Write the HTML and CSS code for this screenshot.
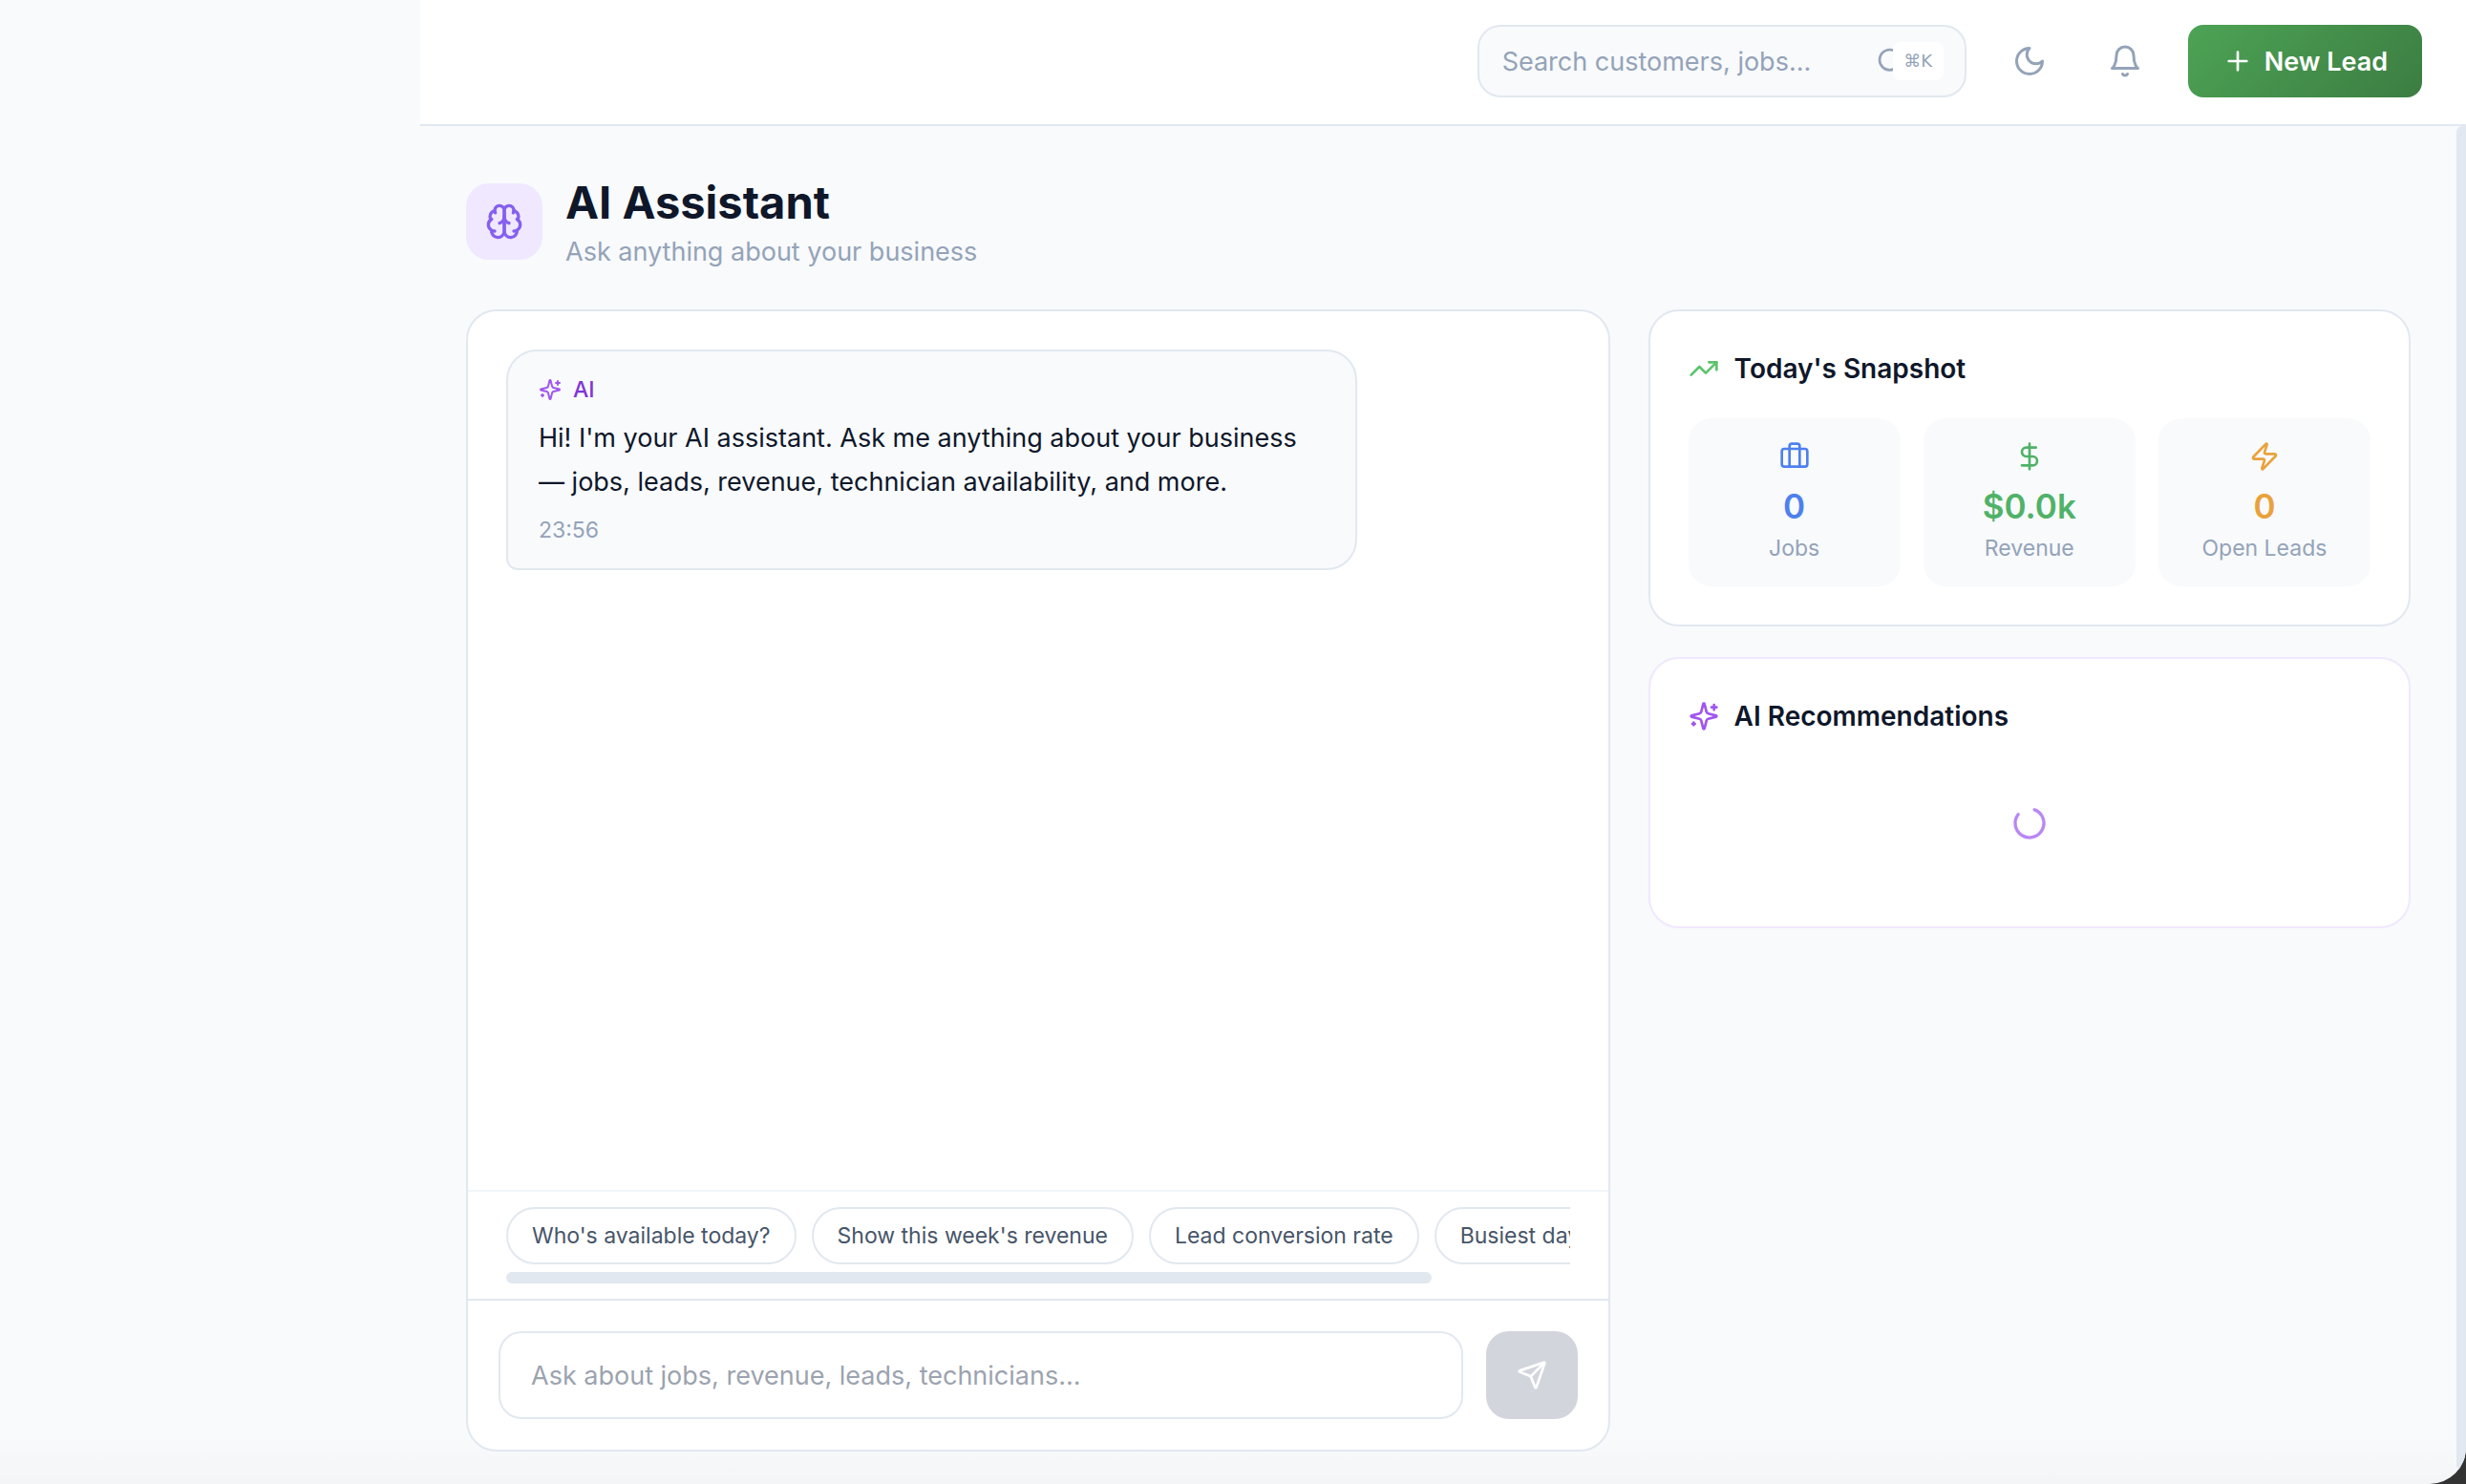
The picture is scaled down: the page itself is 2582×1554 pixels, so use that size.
FILE: index.html
```html
<!DOCTYPE html>
<html lang="en">
<head>
<meta charset="utf-8">
<meta name="viewport" content="width=device-width, initial-scale=1">
<title>AI Assistant</title>
<link rel="stylesheet" href="styles.css">
</head>
<body>
<svg class="sprite" aria-hidden="true">
  <symbol id="sparkles" viewBox="0 0 24 24">
    <path d="M9.937 15.5A2 2 0 0 0 8.5 14.063l-6.135-1.582a.5.5 0 0 1 0-.962L8.5 9.936A2 2 0 0 0 9.937 8.5l1.582-6.135a.5.5 0 0 1 .963 0L14.063 8.5A2 2 0 0 0 15.5 9.937l6.135 1.581a.5.5 0 0 1 0 .964L15.5 14.063a2 2 0 0 0-1.437 1.437l-1.582 6.135a.5.5 0 0 1-.963 0z"/>
    <path d="M20 3v4M22 5h-4M4 17v2M5 18H3"/>
  </symbol>
</svg>
<div class="shell">
  <div class="rail"></div>
  <div class="page">
    <header class="topbar">
      <div class="search">
        <input class="search-input" type="search" aria-label="Search customers and jobs" placeholder="Search customers, jobs...">
        <svg class="icon icon-md search-icon" viewBox="0 0 24 24" aria-hidden="true"><circle cx="11" cy="11" r="8"/><path d="m21 21-4.3-4.3"/></svg>
        <kbd class="shortcut">⌘K</kbd>
      </div>
      <button class="icon-button" type="button" aria-label="Dark mode">
        <svg class="icon icon-lg" viewBox="0 0 24 24" aria-hidden="true"><path d="M12 3a6 6 0 0 0 9 9 9 9 0 1 1-9-9Z"/></svg>
      </button>
      <button class="icon-button" type="button" aria-label="Notifications">
        <svg class="icon icon-lg" viewBox="0 0 24 24" aria-hidden="true"><path d="M6 8a6 6 0 0 1 12 0c0 7 3 9 3 9H3s3-2 3-9"/><path d="M10.3 21a1.94 1.94 0 0 0 3.4 0"/></svg>
      </button>
      <button class="primary" type="button">
        <svg class="icon icon-md" viewBox="0 0 24 24" aria-hidden="true"><path d="M5 12h14M12 5v14"/></svg>
        New Lead
      </button>
    </header>

    <div class="viewport">
      <main class="content">
        <div class="heading">
          <div class="heading-badge">
            <svg class="icon icon-xl" viewBox="0 0 24 24" aria-hidden="true"><path d="M12 5a3 3 0 1 0-5.997.125 4 4 0 0 0-2.526 5.77 4 4 0 0 0 .556 6.588A4 4 0 1 0 12 18Z"/><path d="M12 5a3 3 0 1 1 5.997.125 4 4 0 0 1 2.526 5.77 4 4 0 0 1-.556 6.588A4 4 0 1 1 12 18Z"/><path d="M15 13a4.5 4.5 0 0 1-3-4 4.5 4.5 0 0 1-3 4"/><path d="M17.599 6.5a3 3 0 0 0 .399-1.375M6.003 5.125A3 3 0 0 0 6.401 6.5M3.477 10.896a4 4 0 0 1 .585-.396M19.938 10.5a4 4 0 0 1 .585.396M6 18a4 4 0 0 1-1.967-.516M19.967 17.484A4 4 0 0 1 18 18"/></svg>
          </div>
          <div>
            <h1 class="title">AI Assistant</h1>
            <p class="subtitle">Ask anything about your business</p>
          </div>
        </div>

        <div class="columns">
          <section class="card chat" aria-label="Chat">
            <div class="messages">
              <article class="bubble">
                <div class="author"><svg class="icon icon-sm accent" aria-hidden="true"><use href="#sparkles"/></svg>AI</div>
                <p class="message">Hi! I'm your AI assistant. Ask me anything about your business — jobs, leads, revenue, technician availability, and more.</p>
                <time class="time" datetime="23:56">23:56</time>
              </article>
            </div>
            <div class="suggestions">
              <div class="chips">
                <button class="chip" type="button">Who's available today?</button>
                <button class="chip" type="button">Show this week's revenue</button>
                <button class="chip" type="button">Lead conversion rate</button>
                <button class="chip" type="button">Busiest day this week</button>
              </div>
              <div class="chips-scroll"></div>
            </div>
            <form class="composer">
              <input class="composer-input" type="text" aria-label="Your question" placeholder="Ask about jobs, revenue, leads, technicians...">
              <button class="send" type="submit" aria-label="Send" disabled>
                <svg class="icon icon-md" viewBox="0 0 24 24" aria-hidden="true"><path d="M14.536 21.686a.5.5 0 0 0 .937-.024l6.5-19a.496.496 0 0 0-.635-.635l-19 6.5a.5.5 0 0 0-.024.937l7.93 3.18a2 2 0 0 1 1.112 1.11z"/><path d="m21.854 2.147-10.94 10.939"/></svg>
              </button>
            </form>
          </section>

          <div class="side">
            <section class="card panel">
              <h2 class="panel-title"><svg class="icon icon-md growth" viewBox="0 0 24 24" aria-hidden="true"><path d="m22 7-8.5 8.5-5-5L2 17"/><path d="M16 7h6v6"/></svg>Today's Snapshot</h2>
              <div class="stats">
                <div class="stat">
                  <svg class="icon icon-md blue" viewBox="0 0 24 24" aria-hidden="true"><path d="M16 20V4a2 2 0 0 0-2-2h-4a2 2 0 0 0-2 2v16"/><rect x="2" y="6" width="20" height="14" rx="2"/></svg>
                  <strong class="value blue">0</strong>
                  <span class="label">Jobs</span>
                </div>
                <div class="stat">
                  <svg class="icon icon-md green" viewBox="0 0 24 24" aria-hidden="true"><path d="M12 2v20M17 5H9.500a3.500 3.500 0 0 0 0 7h5a3.500 3.500 0 0 1 0 7H6"/></svg>
                  <strong class="value green">$0.0k</strong>
                  <span class="label">Revenue</span>
                </div>
                <div class="stat">
                  <svg class="icon icon-md amber" viewBox="0 0 24 24" aria-hidden="true"><path d="M4 14a1 1 0 0 1-.78-1.630l9.900-10.200a.5.5 0 0 1 .860.460l-1.920 6.020A1 1 0 0 0 13 10h7a1 1 0 0 1 .780 1.630l-9.900 10.200a.5.5 0 0 1-.860-.460l1.920-6.020A1 1 0 0 0 11 14z"/></svg>
                  <strong class="value amber">0</strong>
                  <span class="label">Open Leads</span>
                </div>
              </div>
            </section>
            <section class="card panel panel-ai">
              <h2 class="panel-title"><svg class="icon icon-md accent" aria-hidden="true"><use href="#sparkles"/></svg>AI Recommendations</h2>
              <div class="loading" role="status" aria-label="Loading">
                <svg class="icon icon-xl spinner" viewBox="0 0 24 24" aria-hidden="true"><path d="M21 12a9 9 0 1 1-6.219-8.560"/></svg>
              </div>
            </section>
          </div>
        </div>
      </main>
      <div class="page-scroll"></div>
    </div>
  </div>
</div>
</body>
</html>
```
FILE: styles.css
```css
:root {
  --ink: #0f172a;
  --body: #475569;
  --muted: #94a3b8;
  --line: #e2e8f0;
  --wash: #f8fafc;
  --text-sm: 23px;
  --text-md: 27px;
  --text-lg: 28px;
  --text-xl: 47px;
}

* { box-sizing: border-box; margin: 0; }

body {
  background: #333;
  color: var(--ink);
  font-family: Inter, "Liberation Sans", sans-serif;
  font-size: var(--text-md);
}

button, input { font: inherit; }

.sprite { position: absolute; width: 0; height: 0; }

.icon {
  flex: none;
  fill: none;
  stroke: currentColor;
  stroke-width: 2;
  stroke-linecap: round;
  stroke-linejoin: round;
}
.icon-sm { width: 24px; height: 24px; }
.icon-md { width: 32px; height: 32px; }
.icon-lg { width: 36px; height: 36px; }
.icon-xl { width: 40px; height: 40px; }

.accent { color: #a055f0; }
.growth { color: #5cc46c; }
.blue { color: #4e80ee; }
.green { color: #50b268; }
.amber { color: #e9a23b; }

.shell {
  display: flex;
  min-height: 100vh;
  background: linear-gradient(to top, #f4f5f7, var(--wash) 48px);
  border-bottom-right-radius: 38px;
  overflow: hidden;
}
.rail { flex: none; width: 440px; }
.page { flex: 1; min-width: 0; display: flex; flex-direction: column; }

.topbar {
  display: flex;
  align-items: center;
  justify-content: flex-end;
  gap: 32px;
  padding: 26px 46px 28px;
  background: #fff;
  border-bottom: 2px solid var(--line);
}
.search {
  display: flex;
  align-items: center;
  width: 512px;
  height: 76px;
  padding: 0 22px 0 24px;
  background: var(--wash);
  border: 2px solid var(--line);
  border-radius: 24px;
  color: var(--muted);
}
.search-input {
  flex: 1;
  min-width: 0;
  padding: 0;
  border: 0;
  outline: 0;
  background: none;
  color: var(--ink);
}
.search-input::placeholder { color: var(--muted); opacity: 1; }
.search-icon { margin-right: -14px; }
.shortcut {
  z-index: 1;
  width: 53px;
  background: #fff;
  border-radius: 8px;
  font-family: "DejaVu Sans", sans-serif;
  font-size: 18px;
  line-height: 40px;
  text-align: center;
}
.icon-button {
  display: flex;
  padding: 16px;
  border: 0;
  background: none;
  color: var(--muted);
}
.primary {
  display: flex;
  align-items: center;
  gap: 12px;
  height: 76px;
  padding: 0 36px;
  border: 0;
  border-radius: 16px;
  background: linear-gradient(135deg, #4da355, #3c7d42);
  color: #fff;
  font-weight: 600;
  white-space: nowrap;
}

.viewport { flex: 1; display: flex; }
.content {
  flex: 1;
  min-width: 0;
  display: flex;
  flex-direction: column;
  gap: 40px;
  padding: 48px 48px 34px;
}
.page-scroll {
  width: 10px;
  margin-bottom: 14px;
  background: var(--line);
  border-radius: 6px 0 0 6px;
}

.heading { display: flex; align-items: center; gap: 24px; }
.heading-badge {
  display: grid;
  place-items: center;
  width: 80px;
  height: 80px;
  border-radius: 24px;
  background: #f0e8fe;
  color: #8560f0;
}
.title { font-size: var(--text-xl); line-height: 64px; font-weight: 700; }
.subtitle { color: var(--muted); line-height: 40px; }

.columns {
  flex: 1;
  display: grid;
  grid-template-columns: minmax(0, 3fr) minmax(0, 2fr);
  gap: 40px;
}
.card {
  background: #fff;
  border: 2px solid var(--line);
  border-radius: 32px;
}

.chat { display: flex; flex-direction: column; }
.messages { flex: 1; padding: 40px; }
.bubble {
  width: 80%;
  padding: 24px 32px;
  background: var(--wash);
  border: 2px solid var(--line);
  border-radius: 32px 32px 32px 12px;
}
.author {
  display: flex;
  align-items: center;
  gap: 12px;
  color: #8035d6;
  font-size: var(--text-sm);
  font-weight: 500;
  line-height: 32px;
}
.message { margin: 12px 0 11px; line-height: 46px; }
.time { display: block; color: var(--muted); font-size: var(--text-sm); line-height: 32px; }

.suggestions { padding: 16px 40px; border-top: 2px solid #f1f5f9; }
.chips { display: flex; gap: 16px; overflow: hidden; }
.chip {
  flex: none;
  height: 60px;
  padding: 0 25px;
  background: #fff;
  border: 2px solid var(--line);
  border-radius: 30px;
  color: var(--body);
  font-size: var(--text-sm);
}
.chips-scroll {
  width: 87%;
  height: 12px;
  margin-top: 8px;
  background: var(--line);
  border-radius: 6px;
}

.composer {
  display: flex;
  gap: 24px;
  padding: 32px;
  border-top: 2px solid var(--line);
}
.composer-input {
  flex: 1;
  min-width: 0;
  height: 92px;
  padding: 0 32px;
  border: 2px solid var(--line);
  border-radius: 24px;
  outline: 0;
  background: #fff;
  color: var(--ink);
}
.composer-input::placeholder { color: #9ca3af; opacity: 1; }
.send {
  display: grid;
  place-items: center;
  width: 96px;
  border: 0;
  border-radius: 24px;
  background: #d2d5dc;
  color: #fff;
}

.side { display: flex; flex-direction: column; gap: 32px; }
.panel { padding: 40px; }
.panel-ai { border-color: #f0e8fe; }
.panel-title {
  display: flex;
  align-items: center;
  gap: 16px;
  font-size: var(--text-lg);
  font-weight: 600;
  line-height: 40px;
}
.stats {
  display: grid;
  grid-template-columns: repeat(3, minmax(0, 1fr));
  gap: 24px;
  margin-top: 32px;
}
.stat {
  display: flex;
  flex-direction: column;
  align-items: center;
  padding: 24px 16px;
  background: var(--wash);
  border-radius: 24px;
}
.value { margin-top: 8px; font-size: 35px; font-weight: 600; line-height: 56px; }
.label { color: var(--muted); font-size: var(--text-sm); line-height: 32px; }
.loading { display: grid; place-items: center; padding: 72px 0 48px; }
.spinner { color: #b987f5; rotate: -70deg; }
```
